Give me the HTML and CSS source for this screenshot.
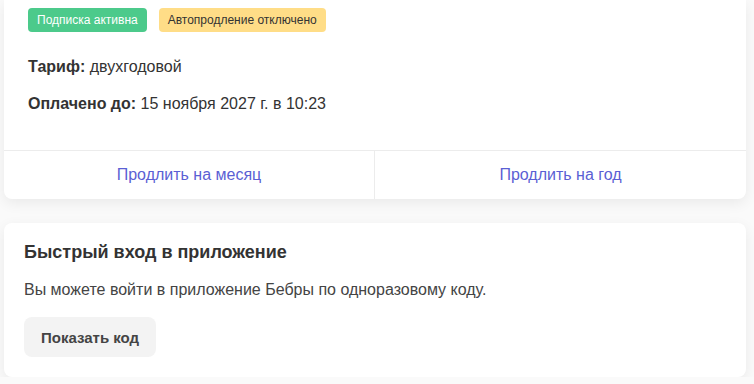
FILE: index.html
```html
<!DOCTYPE html>
<html lang="ru">
<head>
<meta charset="utf-8">
<link rel="stylesheet" href="styles.css">
</head>
<body>
<div class="page">
  <section class="card sub">
    <div class="sub-body">
      <div class="badges">
        <span class="badge badge-green">Подписка активна</span>
        <span class="badge badge-yellow">Автопродление отключено</span>
      </div>
      <p class="row row-first"><b>Тариф:</b> двухгодовой</p>
      <p class="row"><b>Оплачено до:</b> 15 ноября 2027 г. в 10:23</p>
    </div>
    <div class="actions">
      <a class="action" href="#">Продлить на месяц</a>
      <a class="action" href="#">Продлить на год</a>
    </div>
  </section>
  <section class="card quick">
    <h2 class="quick-title">Быстрый вход в приложение</h2>
    <p class="quick-text">Вы можете войти в приложение Бебры по одноразовому коду.</p>
    <button class="btn" type="button">Показать код</button>
  </section>
</div>
</body>
</html>
```
FILE: styles.css
```css
* { box-sizing: border-box; }
html, body { margin: 0; padding: 0; }
body {
  background: #fafafa;
  font-family: "Liberation Sans", Arial, sans-serif;
  color: #333;
}
.page {
  padding: 0 8px 0 4px;
  display: flex;
  flex-direction: column;
  gap: 24px;
}
.card {
  background: #fff;
  border-radius: 8px;
  box-shadow: 0 4px 14px rgba(0,0,0,0.07);
}
.sub { border-radius: 0 0 8px 8px; }
.sub-body { padding: 8px 24px 34px; }
.badges { display: flex; gap: 12px; }
.badge {
  display: inline-flex;
  align-items: center;
  height: 24px;
  padding: 0 9px;
  border-radius: 4px;
  font-size: 12px;
}
.badge-green { background: #4cca8b; color: #fff; }
.badge-yellow { background: #ffdd87; color: #333; }
.row { margin: 13px 0 0; font-size: 16px; line-height: 24px; }
.row-first { margin-top: 23px; }
.row b { font-weight: 700; }
.actions {
  display: grid;
  grid-template-columns: 371px 1fr;
  border-top: 1px solid #ececec;
}
.action {
  display: flex;
  align-items: center;
  justify-content: center;
  height: 48px;
  font-size: 16px;
  color: #5b5fd4;
  text-decoration: none;
}
.action:first-child { border-right: 1px solid #ececec; }
.quick { padding: 17px 20px 20px; }
.quick-title { margin: 0; font-size: 18px; line-height: 24px; font-weight: 700; color: #333; }
.quick-text { margin: 14px 0 0; font-size: 16px; line-height: 24px; color: #444; }
.btn {
  margin-top: 15px;
  height: 40px;
  padding: 0 17px;
  border: 0;
  border-radius: 8px;
  background: #f3f3f3;
  color: #444;
  font-family: inherit;
  font-size: 15px;
  font-weight: 700;
}
```
